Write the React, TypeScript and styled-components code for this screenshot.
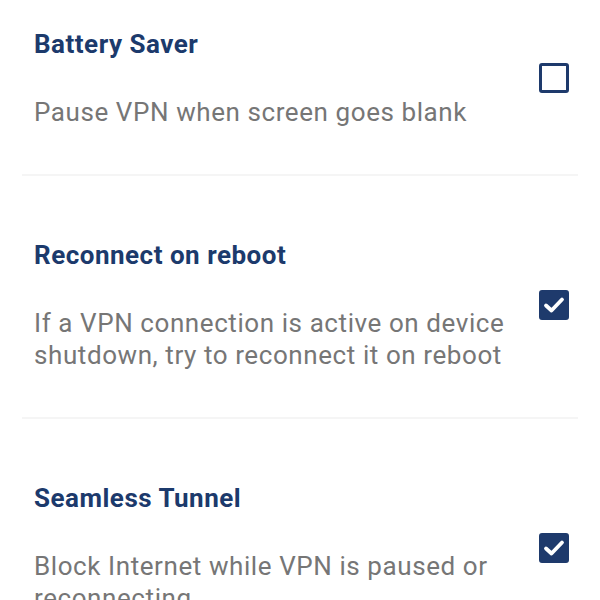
import React from "react";
import styled, { createGlobalStyle } from "styled-components";

const Global = createGlobalStyle`
  html, body { margin: 0; padding: 0; background: #ffffff; }
  body { font-family: Roboto, "Noto Sans", sans-serif; }
`;

const Screen = styled.div`
  width: 600px;
  height: 600px;
  overflow: hidden;
  background: #ffffff;
  padding: 0 22px;
  box-sizing: border-box;
`;

const List = styled.div`
  display: flex;
  flex-direction: column;
`;

const Row = styled.div`
  display: flex;
  align-items: center;
  gap: 24px;
  padding: 63px 9px 46px 12px;
  border-bottom: 2px solid #f5f5f5;
  &:first-child {
    padding-top: 28px;
  }
`;

const TextCol = styled.div`
  flex: 1;
  display: flex;
  flex-direction: column;
  gap: 36px;
`;

const Title = styled.div`
  font-family: Roboto, sans-serif;
  font-weight: 700;
  font-size: 26px;
  line-height: 32px;
  letter-spacing: 0.5px;
  color: #1c3a6c;
`;

const Desc = styled.div`
  font-family: Roboto, sans-serif;
  font-weight: 400;
  font-size: 26px;
  line-height: 32px;
  letter-spacing: 0.58px;
  color: #767676;
`;

const Box = styled.div<{ $checked: boolean }>`
  flex: none;
  width: 30px;
  height: 30px;
  box-sizing: border-box;
  border-radius: 3px;
  border: 3px solid #1e3a6c;
  background: ${(p) => (p.$checked ? "#1e3a6c" : "transparent")};
  display: flex;
  align-items: center;
  justify-content: center;
`;

const Check = () => (
  <svg width="24" height="24" viewBox="0 0 24 24">
    <path
      d="M4 12.5 L9.5 17.5 L20 6.5"
      fill="none"
      stroke="#ffffff"
      strokeWidth="3.8"
      strokeLinecap="round"
      strokeLinejoin="round"
    />
  </svg>
);

const items = [
  { title: "Battery Saver", desc: "Pause VPN when screen goes blank", checked: false },
  {
    title: "Reconnect on reboot",
    desc: "If a VPN connection is active on device shutdown, try to reconnect it on reboot",
    checked: true,
  },
  {
    title: "Seamless Tunnel",
    desc: "Block Internet while VPN is paused or reconnecting",
    checked: true,
  },
];

export default function App() {
  return (
    <>
      <Global />
      <Screen>
        <List>
          {items.map((it) => (
            <Row key={it.title}>
              <TextCol>
                <Title>{it.title}</Title>
                <Desc>{it.desc}</Desc>
              </TextCol>
              <Box $checked={it.checked}>{it.checked && <Check />}</Box>
            </Row>
          ))}
        </List>
      </Screen>
    </>
  );
}
